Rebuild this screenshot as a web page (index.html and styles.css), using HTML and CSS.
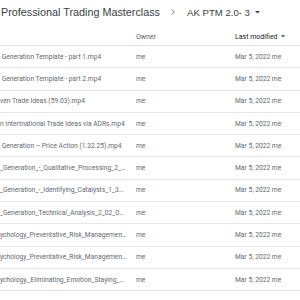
FILE: index.html
```html
<!DOCTYPE html>
<html lang="en">
<head>
  <meta charset="UTF-8" />
  <meta name="viewport" content="width=device-width, initial-scale=1" />
  <title>AK PTM 2.0- 3 - Drive</title>
  <link rel="stylesheet" href="styles.css">
</head>
<body>

<div class="crumbs">
  <span class="crumb">Professional Trading Masterclass</span>
  <svg class="chevron" viewBox="0 0 4 6" width="4" height="6" aria-hidden="true">
    <path d="M0.6 0.5 L3.2 3 L0.6 5.5" fill="none" stroke="#6f7377" stroke-width="0.9"/>
  </svg>
  <span class="crumb current">AK PTM 2.0- 3</span>
  <svg class="caret" viewBox="0 0 5 3" width="5" height="3" aria-hidden="true">
    <path d="M0 0 L5 0 L2.5 2.6 Z" fill="#3c4043"/>
  </svg>
</div>

<div class="list">
  <div class="row head">
    <span class="name"></span>
    <span class="owner">Owner</span>
    <span class="modified sort">Last modified
      <svg viewBox="0 0 5 3" width="4" height="3" aria-hidden="true"><path d="M0 0 L5 0 L2.5 2.6 Z" fill="#3c4043"/></svg>
    </span>
  </div>

  <div class="row"><span class="name">&nbsp;Generation Template - part 1.mp4</span><span class="owner">me</span><span class="modified">Mar 5, 2022 me</span></div>
  <div class="row"><span class="name">&nbsp;Generation Template - part 2.mp4</span><span class="owner">me</span><span class="modified">Mar 5, 2022 me</span></div>
  <div class="row"><span class="name">ven Trade Ideas (59.03).mp4</span><span class="owner">me</span><span class="modified">Mar 5, 2022 me</span></div>
  <div class="row"><span class="name">n Intertnational Trade Ideas via ADRs.mp4</span><span class="owner">me</span><span class="modified">Mar 5, 2022 me</span></div>
  <div class="row"><span class="name">&nbsp;Generation – Price Action (1.32.25).mp4</span><span class="owner">me</span><span class="modified">Mar 5, 2022 me</span></div>
  <div class="row"><span class="name">_Generation_-_Qualitative_Processing_2_02_01.mp4</span><span class="owner">me</span><span class="modified">Mar 5, 2022 me</span></div>
  <div class="row"><span class="name">_Generation_-_Identifying_Catalysts_1_35_01.mp4</span><span class="owner">me</span><span class="modified">Mar 5, 2022 me</span></div>
  <div class="row"><span class="name">_Generation_Technical_Analysis_2_02_01_Part1.mp4</span><span class="owner">me</span><span class="modified">Mar 5, 2022 me</span></div>
  <div class="row"><span class="name">ychology_Preventative_Risk_Management_1.mp4</span><span class="owner">me</span><span class="modified">Mar 5, 2022 me</span></div>
  <div class="row"><span class="name">ychology_Preventative_Risk_Management_2.mp4</span><span class="owner">me</span><span class="modified">Mar 5, 2022 me</span></div>
  <div class="row"><span class="name">ychology,_Eliminating_Emotion_Staying_Objective.mp4</span><span class="owner">me</span><span class="modified">Mar 5, 2022 me</span></div>
  <div class="row"></div>
</div>

</body>
</html>
```

FILE: styles.css
```css
* {
  box-sizing: border-box;
}
body {
  margin: 0;
  width: 300px;
  height: 300px;
  overflow: hidden;
  background: #fff;
  font-family: 'Liberation Sans', Arial, sans-serif;
  color: #5f6368;
}

/* Breadcrumb bar */
.crumbs {
  display: flex;
  align-items: center;
  height: 24px;
  padding-left: 1px;
  color: #3c4043;
  white-space: nowrap;
}
.crumb {
  font-size: 10.8px;
}
.crumb.current {
  font-size: 9.6px;
}
.chevron {
  margin: 0 12px 0 11px;
}
.caret {
  margin-left: 5px;
}

/* File list */
.list {
  width: 300px;
  font-family: Roboto, 'Liberation Sans', sans-serif;
}
.row {
  display: grid;
  grid-template-columns: 136px 99px 1fr;
  align-items: center;
  height: 22.3px;
  border-top: 1px solid #e6e6e6;
  font-size: 6.7px;
  line-height: 12px;
  color: #66696d;
  white-space: nowrap;
}
.row.head {
  height: 21px;
  padding-top: 4px;
  border-top: none;
  font-size: 7px;
  color: #5f6368;
}
.row.head .sort {
  color: #202124;
  display: flex;
  align-items: center;
  gap: 3px;
}
.name {
  max-width: 127px;
  overflow: hidden;
  text-overflow: ellipsis;
}
```
